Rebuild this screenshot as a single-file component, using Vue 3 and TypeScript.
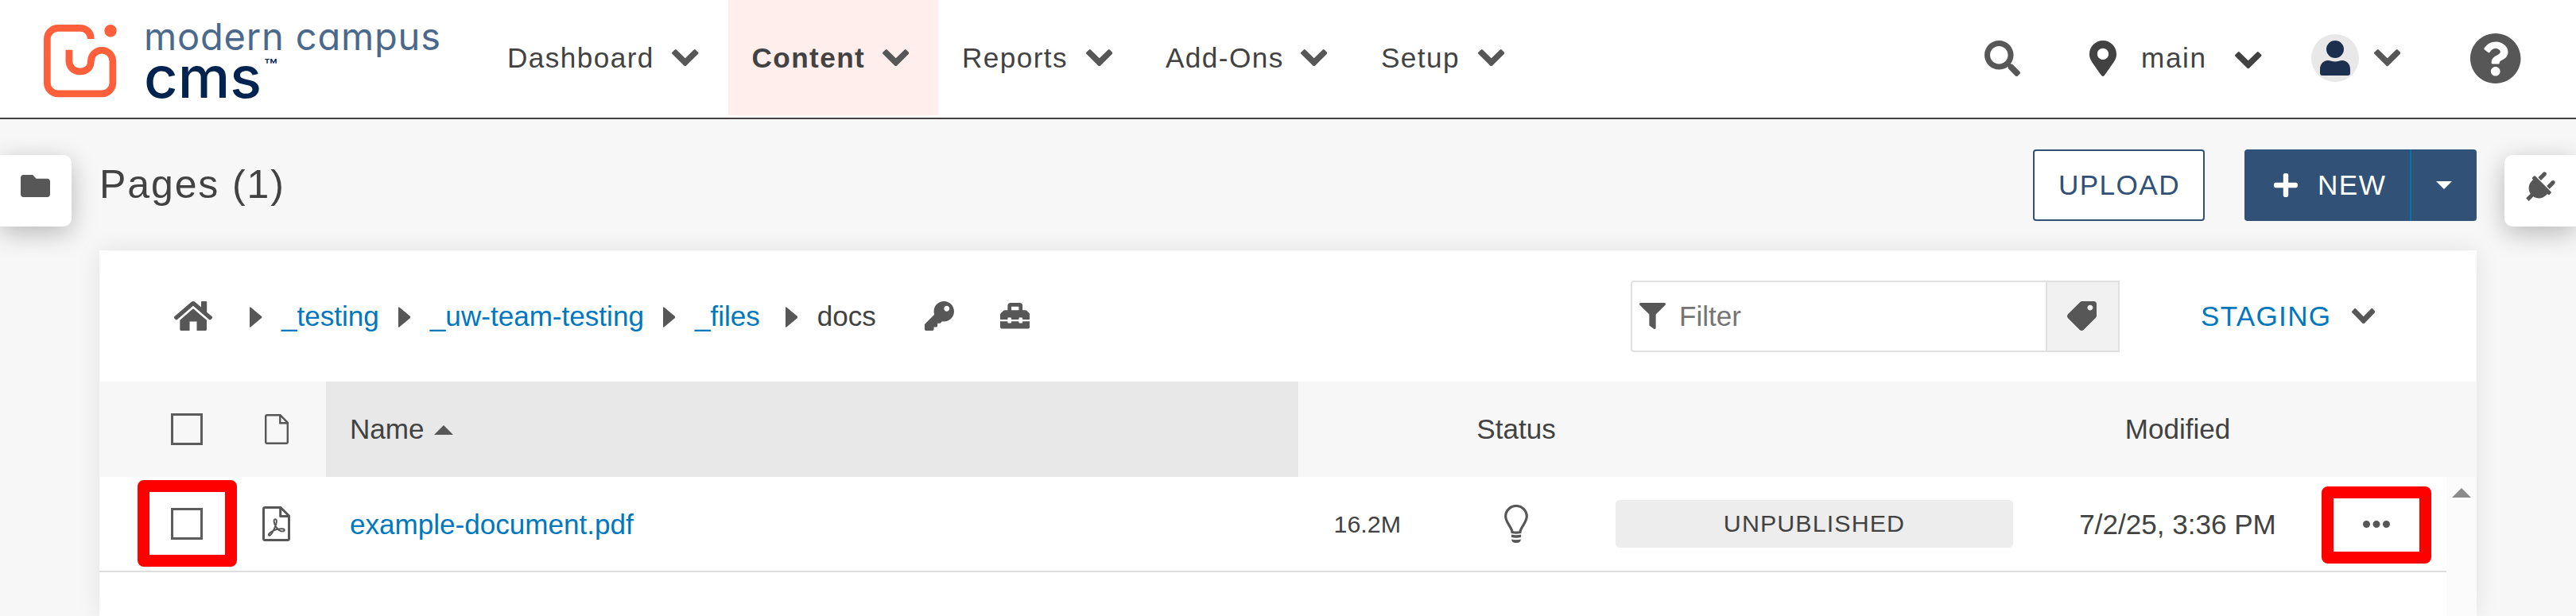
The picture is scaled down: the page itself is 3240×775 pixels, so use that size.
<script setup lang="ts">
import { h } from 'vue'

interface Glyph {
  box: string
  d: string
  transform?: string
}

const glyphs: Record<string, Glyph> = {
  chevron: {
    box: '90 533 1612 1035',
    d: 'M1683 808l-742 741q-19 19-45 19t-45-19l-742-741q-19-19-19-45.500t19-45.500l166-165q19-19 45-19t45 19l531 531 531-531q19-19 45-19t45 19l166 165q19 19 19 45.500t-19 45.500z',
  },
  search: {
    box: '0 0 512 512',
    d: 'M505 442.7L405.3 343c-4.5-4.5-10.6-7-17-7H372c27.6-35.3 44-79.7 44-128C416 93.1 322.9 0 208 0S0 93.1 0 208s93.1 208 208 208c48.3 0 92.7-16.4 128-44v16.3c0 6.4 2.5 12.5 7 17l99.7 99.7c9.4 9.4 24.6 9.4 33.9 0l28.3-28.3c9.4-9.4 9.4-24.6.1-34zM208 336c-70.7 0-128-57.2-128-128 0-70.7 57.2-128 128-128 70.7 0 128 57.2 128 128 0 70.7-57.2 128-128 128z',
  },
  pin: {
    box: '0 0 384 512',
    d: 'M172.268 501.67C26.97 291.031 0 269.413 0 192 0 85.961 85.961 0 192 0s192 85.961 192 192c0 77.413-26.97 99.031-172.268 309.67-9.535 13.774-29.93 13.773-39.464 0zM192 272c44.183 0 80-35.817 80-80s-35.817-80-80-80-80 35.817-80 80 35.817 80 80 80z',
  },
  user: {
    box: '0 0 38 44',
    d: 'M19 0a11 11 0 1 1 0 22a11 11 0 1 1 0-22zM10 25C13 25 15 26.500 19 26.500S25 25 28 25C34 25 38 30 38 36V41Q38 44 35 44H3Q0 44 0 41V36C0 30 4 25 10 25z',
  },
  help: {
    box: '8 8 496 496',
    d: 'M504 256c0 136.997-111.043 248-248 248S8 392.997 8 256C8 119.083 119.043 8 256 8s248 111.083 248 248zM262.655 90c-54.497 0-89.255 22.957-116.549 63.758-3.536 5.286-2.353 12.415 2.715 16.258l34.699 26.31c5.205 3.947 12.621 3.008 16.665-2.122 17.864-22.658 30.113-35.797 57.303-35.797 20.429 0 45.698 13.148 45.698 32.958 0 14.976-12.363 22.667-32.534 33.976C247.128 238.528 216 254.941 216 296v4c0 6.627 5.373 12 12 12h56c6.627 0 12-5.373 12-12v-1.333c0-28.462 83.186-29.647 83.186-106.667 0-58.002-60.165-102-116.531-102zM256 338c-25.365 0-46 20.635-46 46 0 25.364 20.635 46 46 46s46-20.636 46-46c0-25.365-20.635-46-46-46z',
  },
  folder: {
    box: '0 64 512 384',
    d: 'M464 128H272l-64-64H48C21.49 64 0 85.49 0 112v288c0 26.51 21.49 48 48 48h416c26.51 0 48-21.49 48-48V176c0-26.51-21.49-48-48-48z',
  },
  plug: {
    box: '-251 54 468 468',
    transform: 'rotate(45)',
    d: 'M256 144V32c0-17.673 14.327-32 32-32s32 14.327 32 32v112h-64zm112 16H16c-8.837 0-16 7.163-16 16v32c0 8.837 7.163 16 16 16h16v32c0 77.406 54.969 141.971 128 156.796V512h64v-99.204c73.031-14.825 128-79.39 128-156.796v-32h16c8.837 0 16-7.163 16-16v-32c0-8.837-7.163-16-16-16zm-240-16V32c0-17.673-14.327-32-32-32S64 14.327 64 32v112h64z',
  },
  plus: {
    box: '0 32 448 448',
    d: 'M416 208H272V64c0-17.670-14.330-32-32-32h-32c-17.670 0-32 14.330-32 32v144H32c-17.670 0-32 14.330-32 32v32c0 17.670 14.330 32 32 32h144v144c0 17.670 14.330 32 32 32h32c17.670 0 32-14.330 32-32V304h144c17.670 0 32-14.330 32-32v-32c0-17.670-14.330-32-32-32z',
  },
  home: {
    box: '0 0 48 37',
    d: 'M1.800 23L.3 21.400Q-.5 20.200.6 19L21.500 1.100Q24 -.9 26.500 1.100L34 7.600V1Q34 0 35 0H40Q41.200 0 41.200 1.200V13.700L47.400 19Q48.500 20.200 47.700 21.400L46.200 23Q45.200 23.800 44 23L24 5.700L4 23Q2.800 23.800 1.800 23zM24 9.300L41 23.800V35.500Q41 37 39.500 37H28.500V25.500H19.500V37H8.800Q7.300 37 7.300 35.500V23.800z',
  },
  key: {
    box: '0 0 512 512',
    d: 'M512 176.001C512 273.203 433.202 352 336 352c-11.22 0-22.19-1.062-32.827-3.069l-24.012 27.014A23.999 23.999 0 0 1 261.223 384H224v40c0 13.255-10.745 24-24 24h-40v40c0 13.255-10.745 24-24 24H24c-13.255 0-24-10.745-24-24v-78.059c0-6.365 2.529-12.47 7.029-16.971l161.802-161.802C163.108 213.814 160 195.271 160 176 160 78.798 238.797.001 335.999 0 433.488-.001 512 78.511 512 176.001zM336 128c0 26.51 21.49 48 48 48s48-21.49 48-48-21.49-48-48-48-48 21.49-48 48z',
  },
  toolbox: {
    box: '0 32 512 448',
    d: 'M502.63 214.63l-45.25-45.25c-6-6-14.14-9.37-22.63-9.37H384V80c0-26.51-21.49-48-48-48H176c-26.51 0-48 21.49-48 48v80H77.25c-8.49 0-16.62 3.37-22.63 9.37L9.37 214.63c-6 6-9.37 14.14-9.37 22.63V320h128v-16c0-8.84 7.16-16 16-16h32c8.84 0 16 7.16 16 16v16h128v-16c0-8.84 7.16-16 16-16h32c8.84 0 16 7.16 16 16v16h128v-82.75c0-8.48-3.37-16.62-9.37-22.62zM320 160H192V96h128v64zm64 208c0 8.84-7.16 16-16 16h-32c-8.84 0-16-7.16-16-16v-16H192v16c0 8.84-7.16 16-16 16h-32c-8.84 0-16-7.16-16-16v-16H0v96c0 17.67 14.33 32 32 32h448c17.67 0 32-14.33 32-32v-96H384v16z',
  },
  filter: {
    box: '0 0 512 512',
    d: 'M487.976 0H24.028C2.71 0-8.047 25.866 7.058 40.971L192 225.941V432c0 7.831 3.821 15.17 10.237 19.662l80 55.98C298.02 518.69 320 507.493 320 487.98V225.941l184.947-184.97C520.021 25.896 509.338 0 487.976 0z',
  },
  tag: {
    box: '-512 0 512 512',
    transform: 'scale(-1 1)',
    d: 'M0 252.118V48C0 21.49 21.49 0 48 0h204.118a48 48 0 0 1 33.941 14.059l211.882 211.882c18.745 18.745 18.745 49.137 0 67.882L293.823 497.941c-18.745 18.745-49.137 18.745-67.882 0L14.059 286.059A48 48 0 0 1 0 252.118zM112 64c-26.51 0-48 21.49-48 48s21.49 48 48 48 48-21.49 48-48-21.49-48-48-48z',
  },
  right: { box: '0 0 15.5 26', d: 'M0 1.500Q0 -.5 1.500.8L15 12Q16 13 15 14L1.500 25.200Q0 26.500 0 24.500z' },
  up: { box: '0 0 24 12', d: 'M12 0L24 12H0z' },
  down: { box: '0 0 20 10', d: 'M0 0H20L10 10z' },
  dots: {
    box: '0 0 34 9',
    d: 'M4.500 0a4.500 4.500 0 1 1 0 9a4.500 4.500 0 1 1 0-9zM17 0a4.500 4.500 0 1 1 0 9a4.500 4.500 0 1 1 0-9zM29.500 0a4.500 4.500 0 1 1 0 9a4.500 4.500 0 1 1 0-9z',
  },
}

const Icon = (props: { name: string }) => {
  const g = glyphs[props.name]
  return h('svg', { viewBox: g.box, preserveAspectRatio: 'none', 'aria-hidden': 'true' }, [
    h('path', { d: g.d, transform: g.transform, fill: 'currentColor', 'fill-rule': 'evenodd' }),
  ])
}
Icon.props = ['name']

const menu = [
  { label: 'Dashboard', active: false },
  { label: 'Content', active: true },
  { label: 'Reports', active: false },
  { label: 'Add-Ons', active: false },
  { label: 'Setup', active: false },
]

const crumbs = ['_testing', '_uw-team-testing', '_files']

const files = [
  { name: 'example-document.pdf', size: '16.2M', status: 'UNPUBLISHED', modified: '7/2/25, 3:36 PM' },
]
</script>

<template>
  <div class="app">
    <header class="topbar">
      <div class="logo">
        <svg class="logo-mark" viewBox="0 0 92 91.300" aria-hidden="true">
          <path
            d="M59.300 18C59.300 9.500 53 4.350 46 4.350H18A13.650 13.650 0 0 0 4.350 18V73.300A13.650 13.650 0 0 0 18 86.950H73.200A13.650 13.650 0 0 0 86.850 73.300V46A13.750 13.750 0 0 0 59.350 46C59.350 53 55 59 45.600 59C37 59 31.900 52.500 31.900 46V31.700"
          />
          <circle cx="84" cy="7.700" r="7.700" />
        </svg>
        <svg class="logo-words" width="380" height="110" viewBox="0 0 380 110">
          <text class="brand" x="-3" y="42.500" textLength="373">modern campus</text>
          <text class="product" x="-3" y="102.500" textLength="148" lengthAdjust="spacingAndGlyphs">cms</text>
          <text class="tm" x="148" y="69.500" textLength="17" lengthAdjust="spacingAndGlyphs">™</text>
        </svg>
      </div>

      <nav class="menu">
        <a v-for="item in menu" :key="item.label" class="menu-item" :class="{ active: item.active }">
          <span>{{ item.label }}</span>
          <Icon name="chevron" class="chev" />
        </a>
      </nav>

      <div class="tools">
        <Icon name="search" class="search" />
        <Icon name="pin" class="pin" />
        <span class="site">main</span>
        <Icon name="chevron" class="chev site-chev" />
        <span class="avatar"><Icon name="user" class="user" /></span>
        <Icon name="chevron" class="chev user-chev" />
        <Icon name="help" class="help" />
      </div>
    </header>

    <div class="body">
      <aside class="side"><button class="tab tab-left"><Icon name="folder" class="folder" /></button></aside>

      <main class="main">
        <div class="heading">
          <h1>Pages (1)</h1>
          <button class="upload">UPLOAD</button>
          <div class="new">
            <button class="new-main"><Icon name="plus" class="plus" /><span>NEW</span></button>
            <button class="new-more"><Icon name="down" class="down" /></button>
          </div>
        </div>

        <section class="card">
          <div class="toolbar">
            <Icon name="home" class="home" />
            <template v-for="c in crumbs" :key="c">
              <Icon name="right" class="sep" />
              <a class="crumb">{{ c }}</a>
            </template>
            <Icon name="right" class="sep last" />
            <span class="here">docs</span>
            <Icon name="key" class="key" />
            <Icon name="toolbox" class="toolbox" />
            <div class="filter">
              <div class="field"><Icon name="filter" class="funnel" /><span>Filter</span></div>
              <button class="tag-btn"><Icon name="tag" class="tag" /></button>
            </div>
            <a class="staging">STAGING</a>
            <Icon name="chevron" class="staging-chev" />
          </div>

          <div class="grid head">
            <div class="c-check"><i class="box"></i></div>
            <div class="c-type">
              <svg class="doc" viewBox="0 0 30 38" aria-hidden="true">
                <path d="M3 1.200H19.500L28.800 10.800V35Q28.800 36.800 27 36.800H3Q1.200 36.800 1.200 35V3Q1.200 1.200 3 1.200zM19.300 1.500V11.200H28.500" />
              </svg>
            </div>
            <div class="c-name sorted">Name <Icon name="up" class="sort" /></div>
            <div></div>
            <div class="c-mid c-status">Status</div>
            <div></div>
            <div class="c-mid">Modified</div>
          </div>

          <div class="scroll">
            <div class="rows">
              <div v-for="f in files" :key="f.name" class="grid row">
                <div class="c-check mark-host"><i class="box"></i><b class="mark mark-check"></b></div>
                <div class="c-type pdf-cell">
                  <svg class="pdf" viewBox="0 0 35 44" aria-hidden="true">
                    <path d="M3 1.500H23L33.500 12V40.500Q33.500 42.500 31.500 42.500H3.500Q1.500 42.500 1.500 40.500V3.500Q1.500 1.500 3.500 1.500" stroke-width="3" />
                    <path d="M22.700 2V12.500H33.200" stroke-width="3" />
                    <path
                      d="M16.300 16.200C13.500 16.200 14.500 21.500 17 25.500C19.500 29.500 22 31.500 25 31.500C28.800 31.500 28.500 28.500 25 28.300C20 28 15.500 29.500 12 31.500C8.500 33.500 6.800 36 8.500 36.700C11 37.500 14 30.500 16 26C17.800 21.500 19 16.200 16.300 16.200z"
                      stroke-width="2"
                    />
                  </svg>
                </div>
                <div class="c-name"><a>{{ f.name }}</a></div>
                <div class="c-size">{{ f.size }}</div>
                <div class="c-mid c-status">
                  <svg class="bulb" viewBox="0 0 30 48" aria-hidden="true">
                    <path
                      class="line"
                      d="M10 34.500C10 29 1.700 22.500 1.700 14.500A13.300 13 0 0 1 28.300 14.500C28.300 22.500 20 29 20 34.500Q15 35.800 10 34.500z"
                    />
                    <path d="M9 37.500Q15 39 21 37.500V41Q15 42.500 9 41zM9 43.500Q15 45 21 43.500Q20.500 48 15 48T9 43.500z" />
                  </svg>
                </div>
                <div class="badge">{{ f.status }}</div>
                <div class="c-mid date">{{ f.modified }}</div>
                <div class="c-mid mark-host"><Icon name="dots" class="dots" /><b class="mark mark-more"></b></div>
              </div>
            </div>
            <div class="scrollbar"><Icon name="up" class="scroll-up" /></div>
          </div>
        </section>
      </main>

      <aside class="side right"><button class="tab tab-right"><Icon name="plug" class="plug" /></button></aside>
    </div>
  </div>
</template>

<style>
body {
  margin: 0;
  overflow: hidden;
}
</style>

<style scoped>
.app {
  width: 3240px;
  height: 775px;
  overflow: hidden;
  background: #f7f7f7;
  color: #424242;
  font: 35.2px 'Liberation Sans', Arial, sans-serif;
  display: flex;
  flex-direction: column;
}
.app * {
  box-sizing: border-box;
}
svg {
  display: block;
  flex: none;
}
button {
  font: inherit;
  border: 0;
  padding: 0;
  margin: 0;
}
.topbar {
  height: 150px;
  flex: none;
  background: #fff;
  border-bottom: 2px solid #424242;
  display: flex;
  align-items: flex-start;
}
.logo {
  width: 608px;
  height: 148px;
  padding: 20px 0 0 55px;
  display: flex;
}
.logo-mark {
  width: 92px;
  height: 91.3px;
  margin-top: 11px;
  overflow: visible;
}
.logo-mark path {
  fill: none;
  stroke: #ff5f3b;
  stroke-width: 8.7;
}
.logo-mark circle {
  fill: #ff5f3b;
}
.logo-words {
  margin-left: 37px;
  overflow: visible;
}
.logo-words text {
  font-family: Inter, sans-serif;
  font-feature-settings: 'cv11';
}
.brand {
  font-size: 47px;
  fill: #4b698b;
}
.product {
  font-size: 72px;
  font-weight: 500;
  fill: #00234f;
}
.tm {
  font-size: 22px;
  font-weight: 500;
  fill: #00234f;
}
.menu {
  display: grid;
  grid-template-columns: 307.5px 264.5px 256px 270px 223px;
  height: 145px;
  letter-spacing: 1.4px;
}
.menu-item {
  display: flex;
  align-items: center;
  justify-content: space-between;
  padding: 0 37px 0 30px;
}
.menu-item.active {
  background: #ffeeec;
  font-weight: 700;
}
.menu-item:last-child {
  padding-left: 31px;
}
.chev {
  width: 33.500px;
  height: 21.300px;
  color: #575757;
}
.tools {
  margin-left: auto;
  padding-right: 69.500px;
  height: 146px;
  display: flex;
  align-items: center;
  color: #575757;
}
.search {
  width: 45px;
  height: 45px;
}
.pin {
  width: 34px;
  height: 45px;
  margin-left: 87px;
  color: #424242;
}
.site {
  width: 80px;
  margin-left: 31.500px;
  letter-spacing: 1.6px;
  color: #424242;
}
.site-chev {
  margin-left: 38px;
  color: #424242;
  margin-top: 5px;
}
.avatar {
  width: 60px;
  height: 60px;
  margin-left: 62.500px;
  border-radius: 50%;
  background: #e8e8e8;
  display: flex;
  align-items: center;
  justify-content: center;
}
.user {
  width: 38px;
  height: 44px;
  color: #1d2f4f;
}
.user-chev {
  margin-left: 18.500px;
}
.help {
  width: 63.500px;
  height: 63px;
  margin-left: 88px;
}
.body {
  flex: 1;
  display: grid;
  grid-template-columns: 125px 2990px 125px;
}
.side {
  padding-top: 45px;
}
.side.right {
  padding-left: 35px;
}
.tab {
  width: 90px;
  height: 90px;
  background: #fff;
  display: flex;
  align-items: center;
  color: #575757;
  box-shadow: 0 8px 32px rgba(0, 0, 0, 0.26);
}
.tab-left {
  border-radius: 0 10px 10px 0;
  padding: 0 0 12px 26px;
}
.tab-right {
  border-radius: 10px 0 0 10px;
  padding: 0 0 12px 26.500px;
}
.folder {
  width: 37px;
  height: 28px;
}
.plug {
  width: 37px;
  height: 37px;
}
.main {
  display: flex;
  flex-direction: column;
  min-width: 0;
}
.heading {
  height: 90px;
  margin: 38px 0 37px;
  display: flex;
  align-items: center;
}
h1 {
  flex: 1;
  margin: -3px 0 0;
  font-size: 50px;
  font-weight: 400;
  letter-spacing: 1.9px;
}
.upload {
  width: 216px;
  height: 90px;
  border: 2px solid #315177;
  border-radius: 4px;
  background: #fff;
  color: #315177;
  letter-spacing: 1.4px;
  padding-left: 1px;
}
.new {
  width: 292px;
  height: 90px;
  margin-left: 50px;
  display: flex;
  border-radius: 4px;
  overflow: hidden;
  color: #fff;
}
.new button {
  background: #315177;
  color: #fff;
  display: flex;
  align-items: center;
}
.new .new-main {
  width: 208px;
  padding-left: 37px;
  letter-spacing: 1.4px;
}
.plus {
  width: 30px;
  height: 30px;
  margin-right: 25px;
}
.new .new-more {
  width: 84px;
  border-left: 2px solid #0075ad;
  justify-content: center;
}
.down {
  width: 20px;
  height: 10px;
}
.card {
  flex: 1;
  background: #fff;
  box-shadow: 0 0 28px rgba(0, 0, 0, 0.09);
  display: flex;
  flex-direction: column;
  font-size: 35.1px;
}
.toolbar {
  height: 165px;
  padding-left: 93.500px;
  display: flex;
  align-items: center;
}
.home {
  width: 48px;
  height: 37px;
  margin-right: 23.500px;
}
.home,
.sep,
.key,
.toolbox,
.funnel,
.tag,
.staging-chev,
.sort,
.dots {
  color: #575757;
}
.sep {
  width: 15.500px;
  height: 26px;
  margin: 2px 24.500px 0 24px;
}
.sep.last {
  margin-left: 32px;
}
.crumb,
.c-name a,
.staging {
  color: #0078bd;
}
.key {
  width: 37px;
  height: 37px;
  margin-left: 61px;
}
.toolbox {
  width: 37.500px;
  height: 32.500px;
  margin-left: 58px;
}
.filter {
  width: 615px;
  height: 90px;
  margin-left: auto;
  border: 2px solid #e0e0e0;
  border-radius: 4px 0 0 4px;
  display: flex;
}
.field {
  flex: 1;
  display: flex;
  align-items: center;
  color: #757575;
}
.funnel {
  width: 33px;
  height: 33px;
  margin: 0 17px 0 9px;
}
.tag-btn {
  width: 91px;
  border-left: 2px solid #e0e0e0;
  background: #f1f1f1;
  display: flex;
  align-items: center;
  padding-left: 25px;
}
.tag {
  width: 37px;
  height: 37px;
}
.staging {
  width: 163px;
  margin-left: 102px;
  letter-spacing: 1.3px;
  white-space: nowrap;
}
.staging-chev {
  width: 29.500px;
  height: 19.500px;
  margin: 0 128px 0 26.500px;
}
.grid {
  display: grid;
  grid-template-columns: 178px 107px 1223px 129px 270px 500px 414px 86px;
  align-items: center;
}
.head {
  height: 120px;
  background: #f7f7f7;
}
.c-check {
  padding-left: 90px;
}
.box {
  display: block;
  width: 40px;
  height: 40px;
  border: 3px solid #5c5c5c;
}
.c-type {
  padding-left: 29.500px;
}
.pdf-cell {
  padding-left: 27px;
}
.doc {
  width: 30px;
  height: 38px;
  fill: none;
  stroke: #575757;
  stroke-width: 2.4;
}
.pdf {
  width: 35px;
  height: 44px;
  fill: none;
  stroke: #575757;
  stroke-linejoin: round;
}
.c-name {
  padding-left: 30px;
  display: flex;
  align-items: center;
}
.sorted {
  align-self: stretch;
  background: #e8e8e8;
}
.sort {
  width: 24px;
  height: 12px;
  margin: 2px 0 0 12px;
}
.c-mid {
  display: flex;
  justify-content: center;
}
.c-status {
  padding-left: 20px;
}
.scroll {
  flex: 1;
  display: flex;
}
.rows {
  flex: 1;
}
.row {
  height: 120px;
  border-bottom: 2px solid #dedede;
}
.row .c-name,
.date {
  padding-top: 2px;
}
.c-size {
  text-align: right;
  font-size: 30.4px;
}
.bulb {
  width: 30px;
  height: 48px;
  fill: #575757;
}
.bulb .line {
  fill: none;
  stroke: #575757;
  stroke-width: 3.2;
}
.badge {
  height: 60px;
  line-height: 58px;
  border-radius: 5px;
  background: #ededed;
  text-align: center;
  font-size: 30.4px;
  letter-spacing: 1.1px;
}
.dots {
  width: 34px;
  height: 9px;
}
.scrollbar {
  width: 38px;
  background: #fbfbfb;
  padding: 14px 0 0 7px;
}
.scroll-up {
  width: 24px;
  height: 12px;
  color: #8b8b8b;
}
.mark-host {
  position: relative;
}
/* Highlight frames drawn over the row controls */
.mark {
  position: absolute;
  border: 15px solid #f00;
  border-radius: 8px;
}
.mark-check {
  left: 47.500px;
  top: -35px;
  width: 125px;
  height: 108.500px;
}
.mark-more {
  left: -26.500px;
  top: -43px;
  width: 138px;
  height: 97.500px;
}
</style>
